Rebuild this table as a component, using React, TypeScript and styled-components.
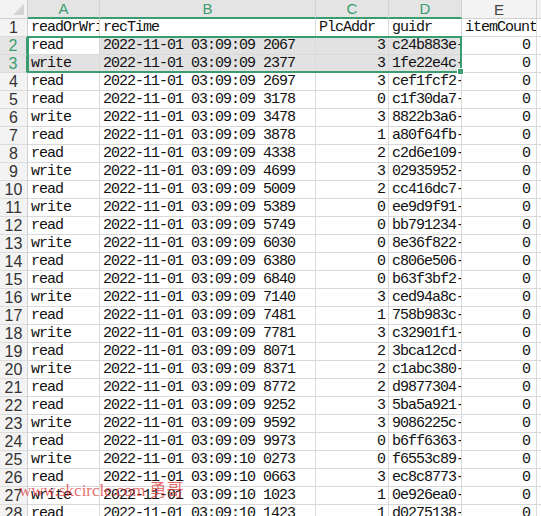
import React from "react";
import styled, { createGlobalStyle, css } from "styled-components";

const Global = createGlobalStyle`
  html, body { margin: 0; padding: 0; background: #ffffff; overflow: hidden; }
  #root { width: 541px; height: 516px; overflow: hidden; }
`;

const GREEN = "#3a9d70";
const GRID = "#d9d9d9";
const COLS = "28px 72px 216px 73px 73px 75px 1fr";

const Sheet = styled.div`
  position: relative;
  width: 541px;
  height: 516px;
  overflow: hidden;
  background: #fff;
`;

const Grid = styled.div`
  display: grid;
  grid-template-columns: ${COLS};
  grid-auto-rows: 18px;
  grid-template-rows: 19px;
`;

const Corner = styled.div`
  position: relative;
  background: #f3f3f3;
  border-right: 1px solid #cfcfcf;
  border-bottom: 1px solid #cfcfcf;
  box-sizing: border-box;
  &::after {
    content: "";
    position: absolute;
    right: 3px;
    bottom: 3px;
    width: 0;
    height: 0;
    border-left: 11px solid transparent;
    border-bottom: 11px solid #d4d4d4;
  }
`;

const ColHead = styled.div<{ $sel?: boolean }>`
  box-sizing: border-box;
  display: flex;
  align-items: center;
  justify-content: center;
  font-family: "Liberation Sans", Arial, sans-serif;
  font-size: 15px;
  border-right: 1px solid #d2d2d2;
  ${(p) =>
    p.$sel
      ? css`
          background: #e4e4e4;
          color: ${GREEN};
          border-bottom: 2px solid ${GREEN};
        `
      : css`
          background: #f3f3f3;
          color: #444;
          border-bottom: 1px solid #cfcfcf;
        `}
`;

const RowHead = styled.div<{ $sel?: boolean }>`
  box-sizing: border-box;
  display: flex;
  align-items: center;
  justify-content: center;
  font-family: "Liberation Sans", Arial, sans-serif;
  font-size: 16px;
  border-bottom: 1px solid #dcdcdc;
  ${(p) =>
    p.$sel
      ? css`
          background: #e4e4e4;
          color: ${GREEN};
          border-right: 2px solid ${GREEN};
        `
      : css`
          background: #f3f3f3;
          color: #333;
          border-right: 1px solid #cfcfcf;
        `}
`;

const Cell = styled.div<{ $num?: boolean; $sel?: boolean; $pr?: number }>`
  box-sizing: border-box;
  border-right: 1px solid ${GRID};
  border-bottom: 1px solid ${GRID};
  background: ${(p) => (p.$sel ? "#e2e2e2" : "#fff")};
  font-family: "Liberation Mono", "Courier New", monospace;
  font-size: 15px;
  letter-spacing: -1px;
  color: #111;
  white-space: nowrap;
  overflow: hidden;
  line-height: 18px;
  padding: 0 ${(p) => p.$pr ?? 3}px 0 3px;
  text-align: ${(p) => (p.$num ? "right" : "left")};
`;

const Selection = styled.div`
  position: absolute;
  left: 27px;
  top: 36px;
  width: 435px;
  height: 37px;
  border: 2px solid ${GREEN};
  box-sizing: border-box;
  pointer-events: none;
  &::after {
    content: "";
    position: absolute;
    right: -4px;
    bottom: -4px;
    width: 5px;
    height: 5px;
    background: ${GREEN};
    border: 1px solid #fff;
  }
`;

const Watermark = styled.div`
  position: absolute;
  left: 19px;
  top: 476px;
  font-family: "Liberation Serif", "Noto Sans CJK SC", serif;
  font-size: 17px;
  color: rgba(220, 60, 60, 0.75);
  white-space: nowrap;
  pointer-events: none;
`;

type Row = [string, string, number, string];

const rows: Row[] = [
  ["read", "03:09:09 2067", 3, "c24b883e-5a1f"],
  ["write", "03:09:09 2377", 3, "1fe22e4c-7b21"],
  ["read", "03:09:09 2697", 3, "cef1fcf2-11a0"],
  ["read", "03:09:09 3178", 0, "c1f30da7-4c90"],
  ["write", "03:09:09 3478", 3, "8822b3a6-9f0e"],
  ["read", "03:09:09 3878", 1, "a80f64fb-22c1"],
  ["read", "03:09:09 4338", 2, "c2d6e109-0d3a"],
  ["write", "03:09:09 4699", 3, "02935952-aa12"],
  ["read", "03:09:09 5009", 2, "cc416dc7-6e5b"],
  ["write", "03:09:09 5389", 0, "ee9d9f91-3b7c"],
  ["read", "03:09:09 5749", 0, "bb791234-8d4e"],
  ["write", "03:09:09 6030", 0, "8e36f822-1c9f"],
  ["read", "03:09:09 6380", 0, "c806e506-5e2a"],
  ["read", "03:09:09 6840", 0, "b63f3bf2-77d1"],
  ["write", "03:09:09 7140", 3, "ced94a8c-4f60"],
  ["read", "03:09:09 7481", 1, "758b983c-0e8b"],
  ["write", "03:09:09 7781", 3, "c32901f1-a3d4"],
  ["read", "03:09:09 8071", 2, "3bca12cd-6b19"],
  ["write", "03:09:09 8371", 2, "c1abc380-2f75"],
  ["read", "03:09:09 8772", 2, "d9877304-c4e2"],
  ["read", "03:09:09 9252", 3, "5ba5a921-9d08"],
  ["write", "03:09:09 9592", 3, "9086225c-1e3f"],
  ["read", "03:09:09 9973", 0, "b6ff6363-8a57"],
  ["write", "03:09:10 0273", 0, "f6553c89-4d16"],
  ["read", "03:09:10 0663", 3, "ec8c8773-b2a9"],
  ["write", "03:09:10 1023", 1, "0e926ea0-5f84"],
  ["read", "03:09:10 1423", 1, "d0275138-7c3e"],
];

export default function App() {
  const letters = ["A", "B", "C", "D"];
  return (
    <Sheet>
      <Global />
      <Grid>
        <Corner />
        {letters.map((l) => (
          <ColHead key={l} $sel>
            {l}
          </ColHead>
        ))}
        <ColHead>E</ColHead>
        <ColHead />

        <RowHead>1</RowHead>
        <Cell>readOrWrite</Cell>
        <Cell>recTime</Cell>
        <Cell>PlcAddr</Cell>
        <Cell>guidr</Cell>
        <Cell $pr={0}>itemCount</Cell>
        <Cell />

        {rows.map((r, i) => {
          const n = i + 2;
          const sel = n === 2 || n === 3;
          return (
            <React.Fragment key={n}>
              <RowHead $sel={sel}>{n}</RowHead>
              <Cell $sel={sel && n !== 2}>{r[0]}</Cell>
              <Cell $sel={sel}>2022-11-01 {r[1]}</Cell>
              <Cell $sel={sel} $num>
                {r[2]}
              </Cell>
              <Cell $sel={sel}>{r[3]}</Cell>
              <Cell $num $pr={6}>
                0
              </Cell>
              <Cell />
            </React.Fragment>
          );
        })}
      </Grid>
      <Selection />
      <Watermark>www.skcircle.com 勇哥</Watermark>
    </Sheet>
  );
}
